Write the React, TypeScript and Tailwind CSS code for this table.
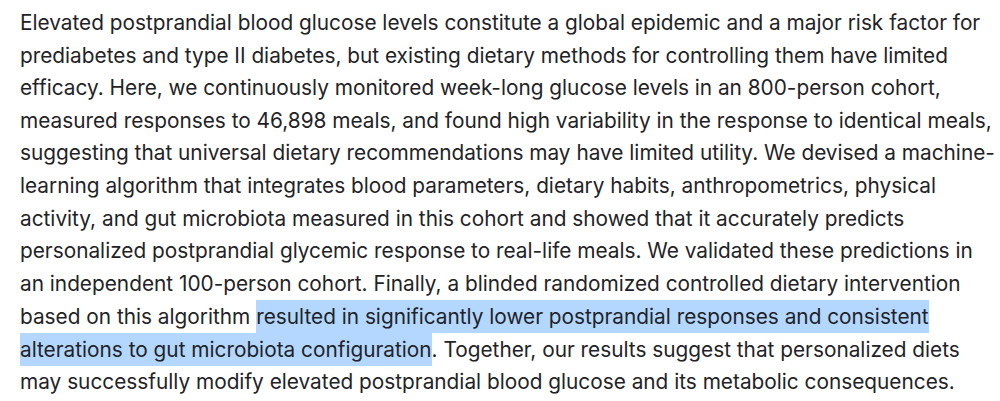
import React from "react";

const hl = "bg-[#b3d7ff] inline-block h-[33px] leading-[33px]";

const lines: React.ReactNode[] = [
  "Elevated postprandial blood glucose levels constitute a global epidemic and a major risk factor for",
  "prediabetes and type II diabetes, but existing dietary methods for controlling them have limited",
  "efficacy. Here, we continuously monitored week-long glucose levels in an 800-person cohort,",
  "measured responses to 46,898 meals, and found high variability in the response to identical meals,",
  "suggesting that universal dietary recommendations may have limited utility. We devised a machine-",
  "learning algorithm that integrates blood parameters, dietary habits, anthropometrics, physical",
  "activity, and gut microbiota measured in this cohort and showed that it accurately predicts",
  "personalized postprandial glycemic response to real-life meals. We validated these predictions in",
  "an independent 100-person cohort. Finally, a blinded randomized controlled dietary intervention",
  <>
    based on this algorithm{" "}
    <span className={hl}>resulted in significantly lower postprandial responses and consistent</span>
  </>,
  <>
    <span className={hl}>alterations to gut microbiota configuration</span>. Together, our results suggest that personalized diets
  </>,
  "may successfully modify elevated postprandial blood glucose and its metabolic consequences.",
];

export default function App() {
  return (
    <div className="w-[1000px] h-[401px] bg-white overflow-hidden pl-[20px] pt-[7px]">
      <div
        className="text-[20.8px] text-[#1f2328] whitespace-nowrap"
        style={{ fontFamily: "Inter, 'Noto Sans', sans-serif" }}
      >
        {lines.map((l, i) => (
          <div key={i} className="h-[32.6px] leading-[32.6px]">
            {l}
          </div>
        ))}
      </div>
    </div>
  );
}
